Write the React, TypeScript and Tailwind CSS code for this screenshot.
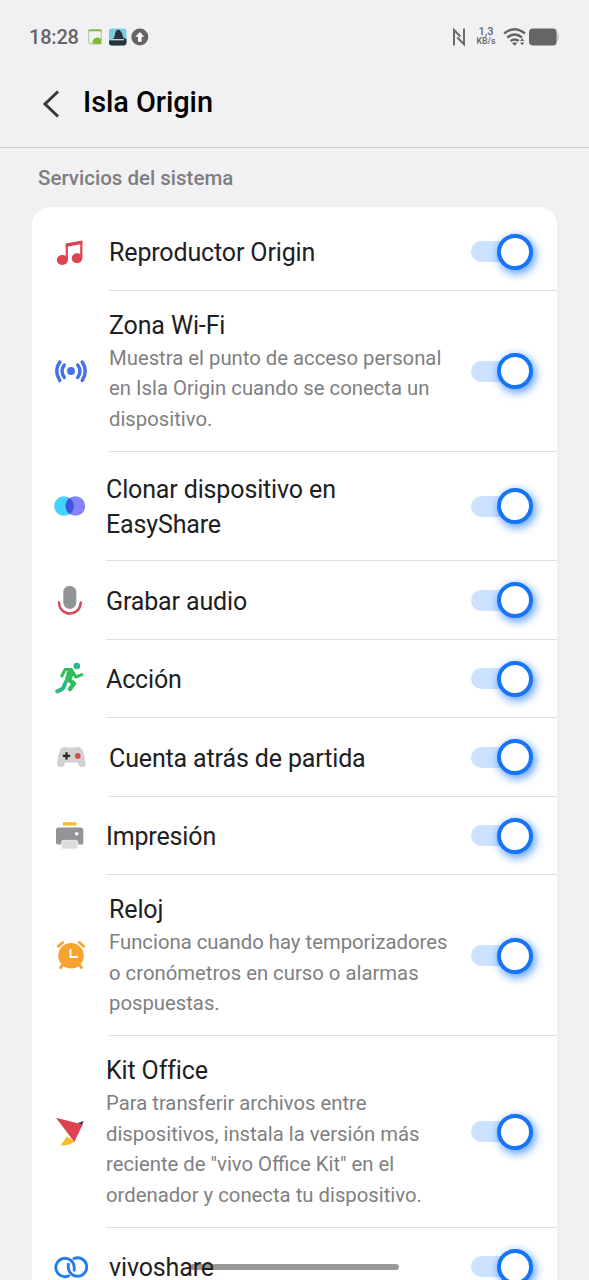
import type { ReactNode } from 'react';

type Row = { title: string[]; desc?: string[]; icon: ReactNode; height: string; indent: string };

const Music = () => (
  <svg className="size-full" viewBox="0 0 60 60">
    <path d="M26.8 38V22.9L41.3 20V36" fill="none" stroke="#dc4450" strokeWidth="2.2" strokeLinejoin="round" />
    <path d="M25.8 21.5L42.3 18.5v3.6l-16.5 3z" fill="#dc4450" />
    <ellipse cx="22.3" cy="38" rx="5.5" ry="5" fill="#dc4450" />
    <ellipse cx="37" cy="36.3" rx="5.3" ry="5" fill="#dc4450" />
  </svg>
);

const Hotspot = () => (
  <svg className="size-full" viewBox="0 0 60 60" fill="none" stroke="#4470e8" strokeWidth="3.4" strokeLinecap="round">
    <circle cx="31" cy="30" r="3.9" fill="#4470e8" stroke="none" />
    <path d="M24.3 24Q19.8 30 24.3 36.5M19.8 21Q13.6 30 19.8 39.5M37.7 24Q42.2 30 37.7 36.5M42.2 21Q48.4 30 42.2 39.5" />
  </svg>
);

const Clone = () => (
  <svg className="size-full" viewBox="0 0 60 60">
    <circle cx="24" cy="30" r="9.8" fill="#43d3fc" />
    <circle cx="35.4" cy="30" r="9.8" fill="#8583fa" />
    <path d="M29.7 22a9.8 9.8 0 0 1 0 16a9.8 9.8 0 0 1 0-16z" fill="#3d55dc" />
  </svg>
);

const Mic = () => (
  <svg className="size-full" viewBox="0 0 60 60">
    <rect x="23.3" y="15.7" width="13" height="23.3" rx="6.5" fill="#929396" />
    <path d="M19 32.5C19.7 47.2 40 47.2 40.8 32.5" fill="none" stroke="#d34b60" strokeWidth="2.5" strokeLinecap="round" />
  </svg>
);

const Runner = () => (
  <svg className="size-full" viewBox="0 0 60 60" fill="none" strokeLinecap="round" strokeLinejoin="round">
    <path d="M25.8 33L23.5 38.5Q22.5 40.4 17.2 42.3" stroke="#2bb58a" strokeWidth="4" />
    <circle cx="36.8" cy="17" r="3.3" fill="#2bb58a" />
    <path d="M21.8 27L25 20.6L31.3 20.4L35.8 28L42 25.7" stroke="#2fbd58" strokeWidth="3" />
    <path d="M30.8 22L27.3 29.8L34 34.5L30 40" stroke="#2fbd58" strokeWidth="4.4" />
    <path d="M27 22L34 25L30.5 32L25.5 30z" fill="#2fbd58" />
  </svg>
);

const Gamepad = () => (
  <svg className="size-full" viewBox="0 0 60 60">
    <path d="M24.4 19.7Q21.3 20.2 20.2 22.8Q17.5 29.5 17 36.2C16.8 40.8 22.2 41.5 24 38L25.3 35.5H37.3L38.7 38C40.6 41.5 46 40.7 45.6 36.2Q45 29.5 42.5 22.8Q41.4 20.2 38.3 19.7Q37 19.5 35.8 20.6H27Q25.6 19.5 24.4 19.7z" fill="#d1d1d2" />
    <path d="M26.5 25.2v7.4M22.8 28.9h7.4" stroke="#292929" strokeWidth="2.3" />
    <circle cx="37.8" cy="28.9" r="2.8" fill="#df4b4b" />
  </svg>
);

const Printer = () => (
  <svg className="size-full" viewBox="0 0 60 60">
    <rect x="22.8" y="16.3" width="13.8" height="3.3" rx="1.1" fill="#fabd1c" />
    <path d="M18.5 21.4H40.8Q43.3 21.4 43.3 23.9V36.7Q43.3 38.6 41.3 38.6H18Q16 38.6 16 36.7V23.9Q16 21.4 18.5 21.4z" fill="#929498" />
    <circle cx="36.7" cy="27.8" r="1.8" fill="#fff" />
    <path d="M23 34.4H36.5Q37.5 34.4 37.7 35.7L38.1 40.9Q38.4 43.1 36 43.1H23.2Q21 43.1 21.3 40.9L21.8 35.7Q22 34.4 23 34.4z" fill="#dcdcdd" stroke="#fff" strokeWidth=".7" />
  </svg>
);

const Clock = () => (
  <svg className="size-full" viewBox="0 0 60 60" fill="none" stroke="#f9a22d" strokeLinecap="round">
    <circle cx="31" cy="29.7" r="12.8" fill="#f9a22d" stroke="none" />
    <path d="M18.4 20.3L22.7 16.5M43.6 20.3L39.3 16.5M23 38.7L20.5 41.7M39 38.7L41.5 41.7" strokeWidth="2.8" />
    <path d="M30.5 23.7V31H37" stroke="#fff" strokeWidth="2" strokeLinejoin="round" />
  </svg>
);

const Office = () => (
  <svg className="size-full" viewBox="0 0 60 60">
    <path d="M37.5 21L43.7 19L42 23.5z" fill="#34424e" />
    <path d="M27 34.5L20.4 43.4Q28.5 44.1 34.3 39.5z" fill="#fabc24" />
    <path d="M16 15.8L42.7 22.5L34.3 40z" fill="#de424e" />
  </svg>
);

const Share = () => (
  <svg className="size-full" viewBox="0 0 60 60" fill="none" stroke="#237df2" strokeWidth="2.9" strokeLinecap="round">
    <path d="M28.6 38.9A9.2 9.2 0 1 1 34.2 30.2V33.2" />
    <path d="M33.9 21.5A9.2 9.2 0 1 1 28.3 30.2V27.2" />
  </svg>
);

const rows: Row[] = [
  { title: ['Reproductor Origin'], icon: <Music />, height: 'h-[84px] pt-[5px]', indent: 'ml-[77px]' },
  {
    title: ['Zona Wi-Fi'],
    desc: ['Muestra el punto de acceso personal', 'en Isla Origin cuando se conecta un', 'dispositivo.'],
    icon: <Hotspot />, height: 'h-[160.5px]', indent: 'ml-[77px] -mt-[2px]',
  },
  { title: ['Clonar dispositivo en', 'EasyShare'], icon: <Clone />, height: 'h-[109.5px]', indent: 'ml-[74px]' },
  { title: ['Grabar audio'], icon: <Mic />, height: 'h-[78.5px]', indent: 'ml-[74px]' },
  { title: ['Acción'], icon: <Runner />, height: 'h-[78.5px]', indent: 'ml-[74px]' },
  { title: ['Cuenta atrás de partida'], icon: <Gamepad />, height: 'h-[78.5px]', indent: 'ml-[77px]' },
  { title: ['Impresión'], icon: <Printer />, height: 'h-[78.5px]', indent: 'ml-[74px]' },
  {
    title: ['Reloj'],
    desc: ['Funciona cuando hay temporizadores', 'o cronómetros en curso o alarmas', 'pospuestas.'],
    icon: <Clock />, height: 'h-[161px]', indent: 'ml-[77px] -mt-px',
  },
  {
    title: ['Kit Office'],
    desc: ['Para transferir archivos entre', 'dispositivos, instala la versión más', 'reciente de "vivo Office Kit" en el', 'ordenador y conecta tu dispositivo.'],
    icon: <Office />, height: 'h-[191.5px]', indent: 'ml-[74px] -mt-px',
  },
  { title: ['vivoshare'], icon: <Share />, height: 'h-[78.5px]', indent: 'ml-[77px]' },
];

const Toggle = () => (
  <button role="switch" aria-checked="true" className="mr-[24px] flex h-[36px] w-[62px] shrink-0 items-center">
    <span className="h-[21px] w-[40px] shrink-0 rounded-full bg-[#cce2ff]" />
    <span className="-ml-[14px] size-[36px] shrink-0 rounded-full border-[4.5px] border-[#1675f4] bg-white shadow-[2px_3px_8px_1px_rgba(22,117,244,0.65)]" />
  </button>
);

const StatusBar = () => (
  <header className="flex h-[72px] items-center px-[29px] pt-px text-[#656567]">
    <time className="w-[58px] text-[20px] font-medium leading-6 tracking-[-0.2px]">18:28</time>
    <svg className="h-[20px] w-[64px]" viewBox="0 0 64 20">
      <rect x="1.7" y="2.5" width="12.6" height="14.5" rx="1.5" fill="#eff5eb" stroke="#a4b48f" strokeWidth=".8" />
      <path d="M1.5 2.7h13v1.6h-13z" fill="#85bd37" />
      <path d="M5.5 16.8Q5 12 8.5 11Q11.5 9.5 14 12V17z" fill="#7fba31" />
      <rect x="22" y="1.5" width="17.5" height="17" rx="3" fill="#79cce1" />
      <path d="M24 13L27 11L28.5 5Q30 1.7 32.7 3L34.8 6L36.5 11L39.5 12V16Q39 18.5 36.5 18.5H25Q22 18.5 22 15.5V14z" fill="#28343c" />
      <path d="M24 12.7h13" stroke="#dce5e8" strokeWidth="1.2" />
      <circle cx="52.8" cy="10" r="8.5" fill="#656565" />
      <path d="M52.8 4.9l4.5 4.8h-2.7v5h-3.6v-5h-2.7z" fill="#fff" />
    </svg>
    <svg className="ml-auto h-[20px] w-[14px]" viewBox="0 0 14 20" fill="none" stroke="currentColor" strokeWidth="1.9">
      <path d="M1 18.5V2.8L7.3 9.5M4.3 10.5L11 17.2V1.5" />
    </svg>
    <div className="ml-[8px] flex w-[22px] flex-col items-center text-center font-medium">
      <span className="text-[11px] leading-[10px]">1,3</span>
      <span className="text-[8.8px] leading-[9px]">KB/s</span>
    </div>
    <svg className="ml-[6px] h-[20px] w-[24px]" viewBox="0 0 24 20" fill="none" stroke="currentColor" strokeWidth="2.4">
      <path d="M1.2 6.5Q11.5-2 22 6.5M4.3 10.5Q11.7 4.3 19 10.5M7.5 14Q11.7 10.8 15.8 14" />
      <path d="M9 16Q11.7 14.3 14.3 16L11.7 18.8zM17 13.9L19.2 11.2L21.4 13.9zM17 15.6L19.2 18.3L21.4 15.6z" fill="currentColor" stroke="none" />
    </svg>
    <svg className="ml-px h-[20px] w-[32px]" viewBox="0 0 32 20">
      <path d="M26 1.5Q29 1.5 29 5V6Q31 6.5 31 10T29 14Q29 18.5 26 18.5z" fill="#c7c7c7" />
      <rect x="1" y="1.5" width="27.5" height="17" rx="4" fill="#656565" />
    </svg>
  </header>
);

export default function App() {
  return (
    <main className="relative h-[1280px] w-[589px] overflow-hidden bg-[#f1f1f3] font-['Roboto',sans-serif]">
      <StatusBar />
      <div className="flex h-[76px] items-start border-b border-[#cecfd1] pl-[42px]">
        <svg className="mt-[18px] h-[28px] w-[18px]" viewBox="0 0 18 28" fill="none" stroke="#37383b" strokeWidth="3">
          <path d="M16 1.5L3 14L16 26.5" />
        </svg>
        <h1 className="ml-[23px] mt-[12px] text-[28.9px] font-medium leading-9 tracking-[-0.05px] text-black">Isla Origin</h1>
      </div>
      <h2 className="flex h-[59px] items-center pl-[38px] pt-[2px] text-[20.5px] font-medium text-[#7e7e80]">Servicios del sistema</h2>
      <section className="mx-[32px] rounded-t-[18px] bg-white">
        {rows.map((row) => (
          <div key={row.title[0]} className={`relative flex items-center ${row.height}`}>
            <div className="-mr-[68px] ml-[8px] size-[60px] shrink-0">{row.icon}</div>
            <div className={`relative z-10 min-w-0 flex-1 whitespace-nowrap ${row.indent}`}>
              <div className="pt-[2px] text-[25px] leading-[35px] tracking-[-0.14px] text-[#202022]">
                {row.title.map((line) => <div key={line}>{line}</div>)}
              </div>
              {row.desc && (
                <div className="pb-px text-[20.3px] leading-[30.5px] text-[#808082]">
                  {row.desc.map((line) => <div key={line}>{line}</div>)}
                </div>
              )}
            </div>
            <Toggle />
            <div className={`absolute bottom-0 left-0 right-0 border-b border-[#e0e0e1] ${row.indent}`} />
          </div>
        ))}
      </section>
      <div className="absolute bottom-[10px] left-[190px] h-[6px] w-[209px] rounded-full bg-[#999999]" />
    </main>
  );
}
